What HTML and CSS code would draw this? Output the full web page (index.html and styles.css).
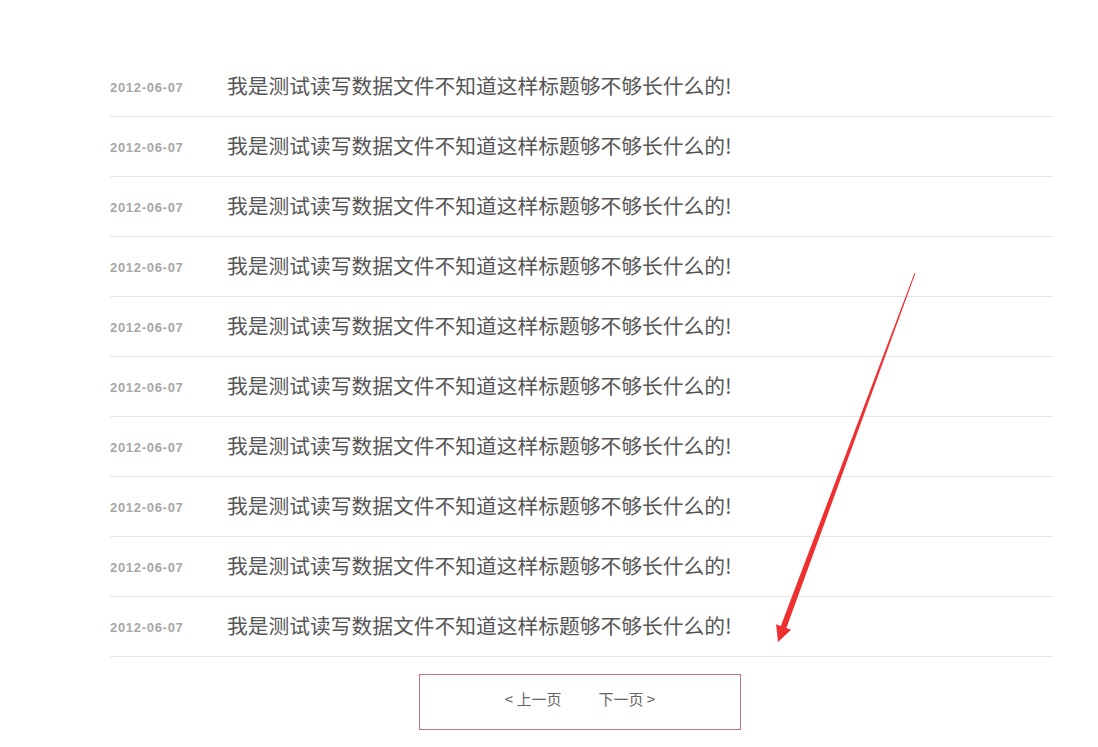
FILE: index.html
```html
<!DOCTYPE html>
<html lang="zh-CN">
<head>
    <meta charset="UTF-8">
    <meta name="viewport" content="width=device-width, initial-scale=1.0">
    <title>新闻列表</title>
    <link rel="stylesheet" href="styles.css">
</head>
<body>

    <div class="main-content">
        <ul class="news-list">
            <li class="news-item"><span class="news-date">2012-06-07</span><a class="news-title" href="#">我是测试读写数据文件不知道这样标题够不够长什么的!</a></li>
            <li class="news-item"><span class="news-date">2012-06-07</span><a class="news-title" href="#">我是测试读写数据文件不知道这样标题够不够长什么的!</a></li>
            <li class="news-item"><span class="news-date">2012-06-07</span><a class="news-title" href="#">我是测试读写数据文件不知道这样标题够不够长什么的!</a></li>
            <li class="news-item"><span class="news-date">2012-06-07</span><a class="news-title" href="#">我是测试读写数据文件不知道这样标题够不够长什么的!</a></li>
            <li class="news-item"><span class="news-date">2012-06-07</span><a class="news-title" href="#">我是测试读写数据文件不知道这样标题够不够长什么的!</a></li>
            <li class="news-item"><span class="news-date">2012-06-07</span><a class="news-title" href="#">我是测试读写数据文件不知道这样标题够不够长什么的!</a></li>
            <li class="news-item"><span class="news-date">2012-06-07</span><a class="news-title" href="#">我是测试读写数据文件不知道这样标题够不够长什么的!</a></li>
            <li class="news-item"><span class="news-date">2012-06-07</span><a class="news-title" href="#">我是测试读写数据文件不知道这样标题够不够长什么的!</a></li>
            <li class="news-item"><span class="news-date">2012-06-07</span><a class="news-title" href="#">我是测试读写数据文件不知道这样标题够不够长什么的!</a></li>
            <li class="news-item"><span class="news-date">2012-06-07</span><a class="news-title" href="#">我是测试读写数据文件不知道这样标题够不够长什么的!</a></li>
        </ul>

        <div class="pager">
            <a class="pager-link" href="#">&lt; 上一页</a>
            <a class="pager-link" href="#">下一页 &gt;</a>
        </div>
    </div>

    <!-- annotation arrow pointing at the pager -->
    <svg class="mark-arrow" width="1098" height="747" viewBox="0 0 1098 747">
        <polygon fill="#ee3030" points="915.4,273.2 786.4,628.1 791.1,629.8 778,642 776.1,624.2 780.8,625.9 914.6,272.8"/>
    </svg>

</body>
</html>
```

FILE: styles.css
```css
body {
    font-family: "Liberation Sans", "Noto Sans CJK SC", sans-serif;
    margin: 0;
    padding: 0;
    background-color: #fff;
}

.main-content {
    width: 943px;
    margin-left: 110px;
    padding-top: 57px;
}

.news-list {
    list-style: none;
    margin: 0;
    padding: 0;
}

.news-item {
    display: flex;
    align-items: center;
    height: 59px;
    border-bottom: 1px solid #e6e6e6;
}

.news-date {
    width: 117px;
    flex-shrink: 0;
    padding-top: 1px;
    font-size: 13px;
    font-weight: bold;
    letter-spacing: 0.7px;
    color: #a6a6a6;
}

.news-title {
    font-family: "Noto Sans CJK SC", sans-serif;
    font-size: 20.75px;
    line-height: 28px;
    padding-bottom: 4px;
    color: #555;
    text-decoration: none;
}

.pager {
    width: 320px;
    margin: 17px 0 0 309px;
    padding: 13px 0 19px;
    border: 1px solid #c2737b;
    display: flex;
    justify-content: center;
    gap: 37px;
    line-height: 22px;
}

.pager-link {
    font-family: "Noto Sans CJK SC", sans-serif;
    font-size: 15px;
    color: #666;
    text-decoration: none;
}

.mark-arrow {
    position: absolute;
    left: 0;
    top: 0;
    pointer-events: none;
}
```
